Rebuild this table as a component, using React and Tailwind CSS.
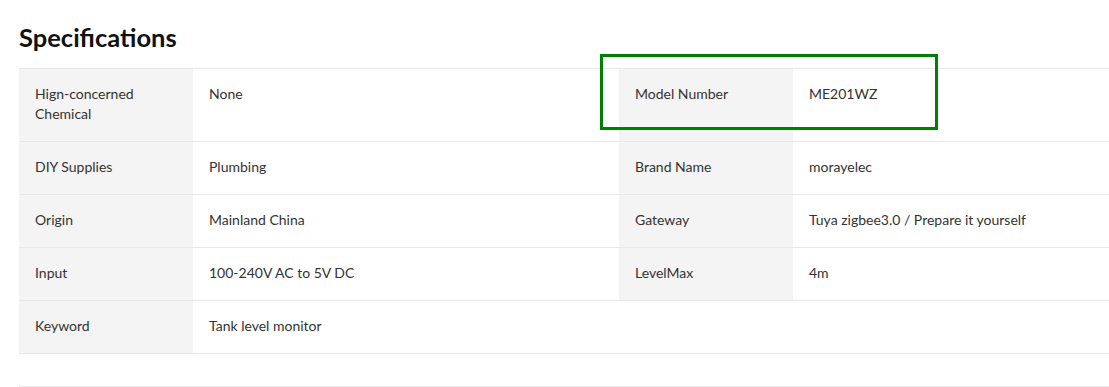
import React from "react";

const rows = [
  ["Hign-concerned Chemical", "None", "Model Number", "ME201WZ"],
  ["DIY Supplies", "Plumbing", "Brand Name", "morayelec"],
  ["Origin", "Mainland China", "Gateway", "Tuya zigbee3.0 / Prepare it yourself"],
  ["Input", "100-240V AC to 5V DC", "LevelMax", "4m"],
  ["Keyword", "Tank level monitor", null, null],
];

function Cell({ children, label }) {
  return (
    <div
      className={
        "px-4 pt-[15px] pb-[17px] text-[14px] leading-5 text-[#333] " +
        (label ? "bg-[#f4f4f4]" : "bg-white")
      }
    >
      {children}
    </div>
  );
}

export default function App() {
  return (
    <div
      className="relative w-[1109px] h-[387px] overflow-hidden bg-white pl-[19px] pt-[22px]"
      style={{ fontFamily: "Lato, 'Open Sans', sans-serif" }}
    >
      <h2 className="text-[25.5px] font-bold leading-[30px] text-[#111] mb-[16px]">
        Specifications
      </h2>
      <div className="border-t border-[#e8e8e8]">
        {rows.map((r, i) => (
          <div
            key={i}
            className="grid grid-cols-[174px_426px_174px_1fr] border-b border-[#e8e8e8]"
          >
            <Cell label>
              <div className={i === 0 ? "w-[120px]" : ""}>{r[0]}</div>
            </Cell>
            <Cell>{r[1]}</Cell>
            {r[2] ? <Cell label>{r[2]}</Cell> : <div />}
            {r[3] ? <Cell>{r[3]}</Cell> : <div />}
          </div>
        ))}
      </div>
      <div className="mt-[32px] border-t border-[#e8e8e8]" />
      <div className="absolute left-[600px] top-[54px] w-[338px] h-[76px] border-[3px] border-[#008000] pointer-events-none" />
    </div>
  );
}
